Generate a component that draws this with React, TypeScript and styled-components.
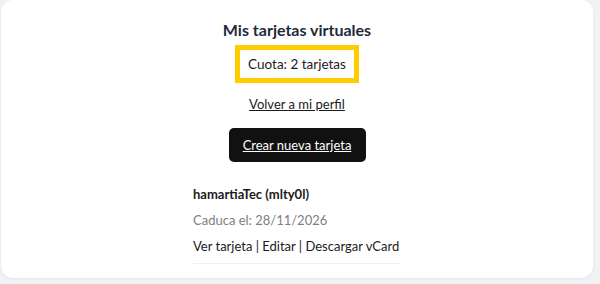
import styled, { createGlobalStyle } from 'styled-components'

const GlobalStyle = createGlobalStyle`
	html, body {
		margin: 0;
		padding: 0;
		background: #f1f2f4;
		font-family: 'Lato', 'Open Sans', sans-serif;
		color: #1b1b1b;
	}
`

const Page = styled.div`
	padding: 0 7px 6px 1px;
`

const Card = styled.section`
	background: #ffffff;
	border-radius: 12px;
	box-shadow: 0 1px 3px rgba(0, 0, 0, 0.06);
	padding: 19px 0 14px;
	display: flex;
	flex-direction: column;
	align-items: center;
`

const Title = styled.h2`
	margin: 0;
	font-size: 16px;
	font-weight: 700;
	line-height: 22px;
	color: #1f2a3a;
`

const Quota = styled.div`
	margin-top: 4px;
	border: 5px solid #ffcc00;
	padding: 4px 8px;
	font-size: 13.5px;
	line-height: 20px;
`

const BackLink = styled.a`
	margin-top: 11px;
	font-size: 13px;
	line-height: 20px;
	color: #1b1b1b;
	text-decoration: underline;
	cursor: pointer;
`

const CreateButton = styled.a`
	margin-top: 14px;
	display: flex;
	align-items: center;
	justify-content: center;
	width: 137px;
	height: 34px;
	background: #111111;
	border-radius: 5px;
	color: #ffffff;
	font-size: 13px;
	text-decoration: underline;
	cursor: pointer;
`

const CardList = styled.ul`
	list-style: none;
	margin: 22px 0 0;
	padding: 0;
	width: 208px;
`

const CardItem = styled.li`
	padding-bottom: 7px;
	border-bottom: 1px solid #f0f0f0;
	font-size: 13px;
`

const CardName = styled.div`
	font-weight: 700;
	line-height: 20px;
`

const Expiry = styled.div`
	margin-top: 6px;
	color: #808080;
	line-height: 20px;
`

const Actions = styled.div`
	margin-top: 6px;
	line-height: 20px;
	white-space: nowrap;
`

const cards = [{ name: 'hamartiaTec', id: 'mlty0l', expires: '28/11/2026' }]

export default function App() {
	return (
		<>
			<GlobalStyle />
			<Page>
				<Card>
					<Title>Mis tarjetas virtuales</Title>
					<Quota>Cuota: 2 tarjetas</Quota>
					<BackLink>Volver a mi perfil</BackLink>
					<CreateButton>Crear nueva tarjeta</CreateButton>
					<CardList>
						{cards.map((card) => (
							<CardItem key={card.id}>
								<CardName>
									{card.name} ({card.id})
								</CardName>
								<Expiry>Caduca el: {card.expires}</Expiry>
								<Actions>Ver tarjeta | Editar | Descargar vCard</Actions>
							</CardItem>
						))}
					</CardList>
				</Card>
			</Page>
		</>
	)
}
